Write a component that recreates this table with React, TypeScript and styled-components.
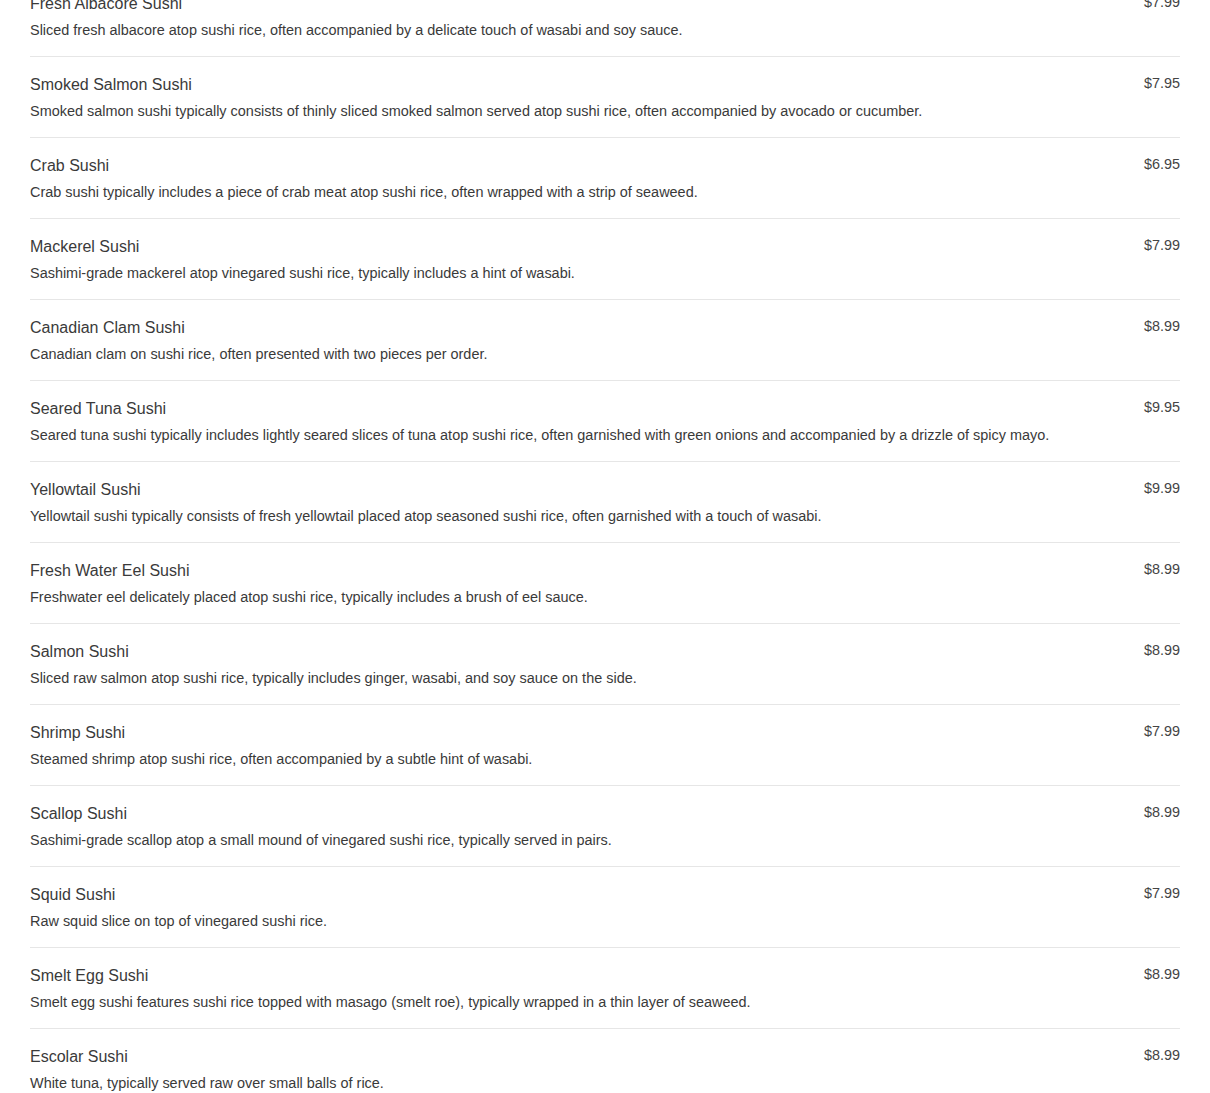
import React from "react";
import styled, { createGlobalStyle } from "styled-components";

const GlobalStyle = createGlobalStyle`
  html, body { margin: 0; padding: 0; background: #fff; }
  body { font-family: "Liberation Sans", Arial, sans-serif; }
`;

const List = styled.ul`
  list-style: none;
  margin: -24px 0 0;
  padding: 0 30px;
`;

const Row = styled.li`
  display: flex;
  justify-content: space-between;
  align-items: flex-start;
  gap: 24px;
  padding: 18px 0 16px;
  border-bottom: 1px solid #e6e6e6;
`;

const Info = styled.div`
  display: flex;
  flex-direction: column;
  gap: 6px;
`;

const Name = styled.div`
  font-size: 16px;
  line-height: 20px;
  color: #3a3a3a;
`;

const Desc = styled.div`
  font-size: 14.45px;
  line-height: 20px;
  color: #3a3a3a;
`;

const Price = styled.div`
  font-size: 14.4px;
  line-height: 16px;
  color: #444;
  white-space: nowrap;
`;

const items = [
  ["Fresh Albacore Sushi", "Sliced fresh albacore atop sushi rice, often accompanied by a delicate touch of wasabi and soy sauce.", "$7.99"],
  ["Smoked Salmon Sushi", "Smoked salmon sushi typically consists of thinly sliced smoked salmon served atop sushi rice, often accompanied by avocado or cucumber.", "$7.95"],
  ["Crab Sushi", "Crab sushi typically includes a piece of crab meat atop sushi rice, often wrapped with a strip of seaweed.", "$6.95"],
  ["Mackerel Sushi", "Sashimi-grade mackerel atop vinegared sushi rice, typically includes a hint of wasabi.", "$7.99"],
  ["Canadian Clam Sushi", "Canadian clam on sushi rice, often presented with two pieces per order.", "$8.99"],
  ["Seared Tuna Sushi", "Seared tuna sushi typically includes lightly seared slices of tuna atop sushi rice, often garnished with green onions and accompanied by a drizzle of spicy mayo.", "$9.95"],
  ["Yellowtail Sushi", "Yellowtail sushi typically consists of fresh yellowtail placed atop seasoned sushi rice, often garnished with a touch of wasabi.", "$9.99"],
  ["Fresh Water Eel Sushi", "Freshwater eel delicately placed atop sushi rice, typically includes a brush of eel sauce.", "$8.99"],
  ["Salmon Sushi", "Sliced raw salmon atop sushi rice, typically includes ginger, wasabi, and soy sauce on the side.", "$8.99"],
  ["Shrimp Sushi", "Steamed shrimp atop sushi rice, often accompanied by a subtle hint of wasabi.", "$7.99"],
  ["Scallop Sushi", "Sashimi-grade scallop atop a small mound of vinegared sushi rice, typically served in pairs.", "$8.99"],
  ["Squid Sushi", "Raw squid slice on top of vinegared sushi rice.", "$7.99"],
  ["Smelt Egg Sushi", "Smelt egg sushi features sushi rice topped with masago (smelt roe), typically wrapped in a thin layer of seaweed.", "$8.99"],
  ["Escolar Sushi", "White tuna, typically served raw over small balls of rice.", "$8.99"],
];

export default function App() {
  return (
    <>
      <GlobalStyle />
      <List>
        {items.map(([name, desc, price]) => (
          <Row key={name}>
            <Info>
              <Name>{name}</Name>
              <Desc>{desc}</Desc>
            </Info>
            <Price>{price}</Price>
          </Row>
        ))}
      </List>
    </>
  );
}
